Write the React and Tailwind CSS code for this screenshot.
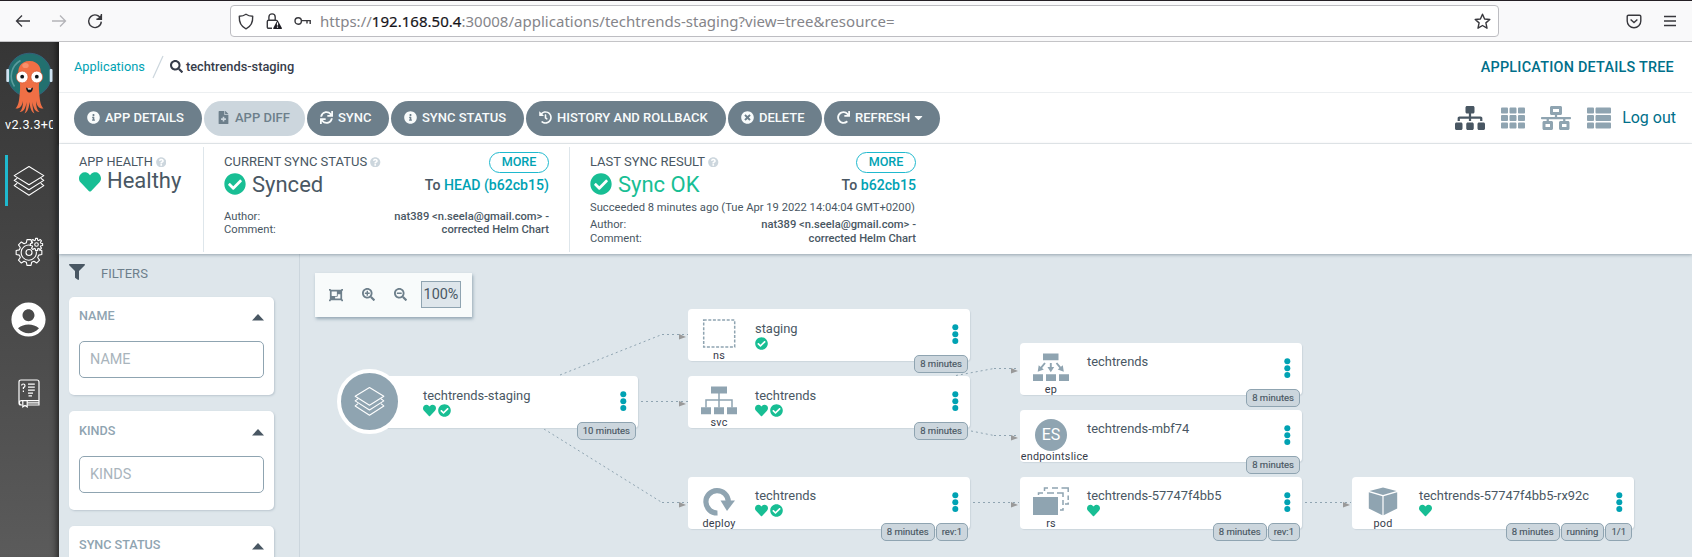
import React from "react";
import {
  FaInfoCircle, FaFileMedical, FaSync, FaHistory, FaTimesCircle, FaRedo, FaCaretDown,
  FaHeart, FaCheckCircle, FaQuestionCircle, FaSearch, FaSitemap, FaTh, FaNetworkWired, FaThList,
  FaFilter, FaSearchPlus, FaSearchMinus, FaObjectGroup,
} from "react-icons/fa";
import { MdAccountCircle } from "react-icons/md";

function BrowserBar() {
  return (
    <header className="flex h-[42px] shrink-0 items-center border-t border-b border-t-[#241f24] border-b-[#c4c4c7] bg-[#f9f9fa]">
      <div className="flex w-[230px] shrink-0 items-center pl-[15px]">
        <svg width="16" height="16" viewBox="0 0 16 16" fill="none" stroke="#38383d" strokeWidth="1.3">
          <path d="M15 8H1.5M7 2.5L1.5 8L7 13.5" />
        </svg>
        <svg className="ml-5" width="16" height="16" viewBox="0 0 16 16" fill="none" stroke="#b4b4b8" strokeWidth="1.3">
          <path d="M1 8H14.5M9 2.5L14.5 8L9 13.5" />
        </svg>
        <svg className="ml-5" width="16" height="16" viewBox="0 0 16 16" fill="none" stroke="#38383d" strokeWidth="1.4">
          <path d="M13.9 6A6.3 6.3 0 1 0 14.3 8.6M14.4 1V6.2H9.4" />
          <path d="M14.6 1.4V6.3H9.8Z" fill="#38383d" stroke="none" />
        </svg>
      </div>
      <div className="flex h-8 w-[1269px] items-center rounded-[4px] border border-[#bdbdc2] bg-white pl-[7px]">
        <svg width="16" height="17" viewBox="0 0 16 17" fill="none" stroke="#38383d" strokeWidth="1.4">
          <path d="M8 1.2C6 2.6 3.6 3.2 1.3 3.3C1 9 3 13.6 8 15.8C13 13.6 15 9 14.7 3.3C12.4 3.2 10 2.6 8 1.2Z" strokeLinejoin="round" />
        </svg>
        <svg className="ml-3" width="16" height="17" viewBox="0 0 16 17" fill="none">
          <path d="M6 15.3H2.6Q1.3 15.3 1.3 14V8.6Q1.3 7.3 2.6 7.3H9.6Q10.8 7.3 10.8 8M2.9 7V4A3 3 0 0 1 9.2 4V7" stroke="#38383d" strokeWidth="1.4" />
          <path d="M11.5 6.9L16 15.2Q16 16 15.2 16H7.8Q7 16 7.2 15.2Z" fill="#1c1b22" />
          <path d="M11.5 9.6V12.6M11.5 13.6V14.8" stroke="white" strokeWidth="1.2" />
        </svg>
        <svg className="ml-3" width="17" height="10" viewBox="0 0 17 10" fill="none" stroke="#38383d" strokeWidth="1.4">
          <circle cx="4.2" cy="5" r="3.2" />
          <path d="M7.4 4.6H16.2V8M13 4.6V7.4" />
        </svg>
        <div className="ml-[9px] font-['Noto_Sans'] text-[15px] leading-5 tracking-[0.02px] whitespace-nowrap text-[#85858a]">
          https://<span className="text-[#15141a] [-webkit-text-stroke:0.2px_#15141a]">192.168.50.4</span>:30008/applications/techtrends-staging?view=tree&amp;resource=
        </div>
        <svg className="mr-[7px] ml-auto" width="17" height="17" viewBox="0 0 17 17" fill="none" stroke="#38383d" strokeWidth="1.4" strokeLinejoin="round">
          <path d="M8.5 1.2L10.6 6L15.8 6.5L11.9 9.9L13 15.2L8.5 12.5L4 15.2L5.1 9.9L1.2 6.5L6.4 6Z" />
        </svg>
      </div>
      <svg className="ml-[127px]" width="16" height="15" viewBox="0 0 16 15" fill="none" stroke="#38383d" strokeWidth="1.4">
        <path d="M2.5 1.2H13.5Q14.8 1.2 14.8 2.5V7A6.8 6.8 0 0 1 1.2 7V2.5Q1.2 1.2 2.5 1.2Z" />
        <path d="M4.6 5.4L8 8.6L11.4 5.4" />
      </svg>
      <svg className="ml-[22px]" width="12" height="12" viewBox="0 0 12 12" stroke="#38383d" strokeWidth="1.4">
        <path d="M0 1.5H12M0 6H12M0 10.5H12" />
      </svg>
    </header>
  );
}

function Octopus() {
  return (
    <svg className="ml-px" width="48" height="62" viewBox="0 0 48 62">
      <circle cx="23.5" cy="23" r="21.8" fill="#22706f" stroke="#35607a" strokeWidth="1" />
      <path d="M8.5 34.5A18 18 0 0 1 14.5 8.5" fill="none" stroke="#5b9c9d" strokeWidth="1.6" />
      <rect x="0.3" y="17" width="2.8" height="13" rx="1" fill="#cfe3f2" />
      <rect x="43.7" y="17" width="2.8" height="13" rx="1" fill="#cfe3f2" />
      <path d="M23.5 9C14 9 10.5 17 13 25C14.2 30 14.5 36 13.6 43C13 50 12 54 9.5 56.5C14 57 16 54 17 49C17 54 16 58 13.5 60C18 60 20 55 20.5 50C20.6 54 20 59 18.5 61.5C22 60 23 55 23.5 50C24 55 25 60 28.5 61.5C27 59 26.4 54 26.5 50C27 55 29 60 33.5 60C31 58 30 54 30 49C31 54 33 57 37.5 56.5C35 54 34 50 33.4 43C32.5 36 32.8 30 34 25C36.5 17 33 9 23.5 9Z" fill="#ef6f45" />
      <ellipse cx="19.5" cy="13.5" rx="3.2" ry="2.6" fill="#f6916c" />
      <circle cx="16.2" cy="25" r="5.9" fill="white" stroke="#d9542e" strokeWidth="0.7" />
      <circle cx="30.8" cy="25" r="5.9" fill="white" stroke="#d9542e" strokeWidth="0.7" />
      <circle cx="16.2" cy="24.7" r="1.9" fill="#10171c" />
      <circle cx="30.8" cy="24.7" r="1.9" fill="#10171c" />
      <path d="M20 35.5Q23.5 37.5 27 35.5Q26.5 40.5 23.5 40.5Q20.5 40.5 20 35.5Z" fill="#10171c" />
      <path d="M21.7 36.3L25.3 36.3L25 37.4H22Z" fill="white" />
    </svg>
  );
}

function LayersIcon({ size }) {
  return (
    <svg width={size} height={size} viewBox="0 0 32 32" fill="none" stroke="white" strokeWidth="1.1" strokeLinejoin="round">
      <path d="M16 1.5L30.8 10.6L16 19.8L1.2 10.6Z" />
      <path d="M4.2 13.2L1.2 15.4L16 24.8L30.8 15.4L27.8 13.2" />
      <path d="M4.2 18.2L1.2 20.6L16 30.2L30.8 20.6L27.8 18.2" />
    </svg>
  );
}

// Outline of a toothed wheel; `from` and `count` select which teeth are drawn.
function gearPath(cx, cy, outer, inner, teeth, from, count) {
  const step = (Math.PI * 2) / teeth;
  const pts = [];
  for (let i = from; i < from + count; i++) {
    [[-0.34, inner], [-0.2, outer], [0.2, outer], [0.34, inner]].forEach(([o, r]) => {
      const a = (i + o) * step;
      pts.push(`${(cx + r * Math.cos(a)).toFixed(2)} ${(cy + r * Math.sin(a)).toFixed(2)}`);
    });
  }
  return `M${pts.join("L")}`;
}

function GearsIcon() {
  return (
    <svg width="30" height="30" viewBox="0 0 30 30" fill="none" stroke="white" strokeWidth="1.1" strokeLinejoin="round">
      <path d={gearPath(14, 15.5, 13, 10, 8, 0, 7)} />
      <path d="M15.5 8.2A7.6 7.6 0 1 0 21.3 14.5" />
      <circle cx="14" cy="15.5" r="3" />
      <path d={`${gearPath(21.5, 7.5, 6.2, 4.5, 8, 0, 8)}Z`} />
      <circle cx="21.5" cy="7.5" r="1.8" />
    </svg>
  );
}

function BookIcon() {
  return (
    <svg width="22" height="29" viewBox="0 0 22 29" fill="none" stroke="white" strokeWidth="1.2">
      <path d="M4 26H2.8Q1 26 1 24V3Q1 1 3 1H19Q21 1 21 3V21.6H3.6Q1.4 21.6 1.4 23.8Q1.4 26 3.6 26M9.4 26H21V21.6M9.4 23.8H21" />
      <path d="M4.8 22V27.8L7 26.4L9.2 27.8V22" />
      <path d="M10 5.2H16.8M10 8.2H16.8M10 11.2H16.8M10 14.2H15M10.5 16.8H14" />
      <path d="M3.6 6.6Q3.6 5 5.3 5Q7 5 7 6.7Q7 8 5.4 8.6V10M5.4 11.6V13" />
    </svg>
  );
}

function Sidebar() {
  return (
    <aside className="relative flex w-[59px] shrink-0 flex-col items-center bg-linear-to-b from-[#363636] to-[#5b5b5b] pt-[10px] shadow-[inset_-7px_0_6px_-5px_rgba(0,0,0,0.6)]">
      <Octopus />
      <div className="mt-px ml-[5px] w-[48px] self-start overflow-hidden text-[12.6px] leading-5 tracking-[0.3px] whitespace-nowrap text-white">v2.3.3+0</div>
      <div className="mt-5 flex h-[51px] w-full items-center pl-[5px]">
        <div className="h-full w-[3px] bg-[#1fb9ce]" />
        <div className="ml-[5px]"><LayersIcon size={32} /></div>
      </div>
      <div className="mt-[31px]"><GearsIcon /></div>
      <div className="mt-8 -ml-[2px]"><MdAccountCircle size={41} color="white" /></div>
      <div className="mt-[39px] -ml-px"><BookIcon /></div>
    </aside>
  );
}

function ActionButton({ icon: Icon, label, width, disabled, caret }) {
  return (
    <button className={`flex h-[35px] shrink-0 items-center rounded-full pl-[13px] text-[13px] font-medium whitespace-nowrap ${width} ${disabled ? "bg-[#ccd6dd] text-[#6d7f8b]" : "bg-[#6d7f8b] text-[#f8fbfb]"}`}>
      <Icon size={13} className="-mt-[2px] mr-[5px]" />
      <span className="-mt-px">{label}</span>
      {caret && <FaCaretDown size={13} className="-mt-px ml-[2px]" />}
    </button>
  );
}

function Help() {
  return <FaQuestionCircle size={10.5} className="ml-[3px] text-[#ccd6dd]" />;
}

function MoreButton() {
  return <div className="flex h-[21px] w-[60px] items-center justify-center rounded-full border border-[#1fb9ce] text-[12.6px] font-medium text-[#00a2b3]">MORE</div>;
}

function CommitRows({ gap }) {
  return (
    <div className={`flex flex-col text-[11.2px] leading-[13px] ${gap}`}>
      <div className="flex justify-between"><span>Author:</span><span className="font-medium">nat389 &lt;n.seela@gmail.com&gt; -</span></div>
      <div className="flex justify-between"><span>Comment:</span><span className="font-medium">corrected Helm Chart</span></div>
    </div>
  );
}

function StatusPanel() {
  return (
    <section className="relative z-10 flex h-[110px] shrink-0 bg-white pt-[3px] pb-[2px] pl-5 text-[#495763] shadow-[0_1px_3px_rgba(80,100,115,0.5)]">
      <div className="flex w-[125px] flex-col border-r border-[#dee6eb] pt-[7px]">
        <div className="flex items-center text-[12.7px] leading-4">APP HEALTH<Help /></div>
        <div className="-mt-[2px] flex items-center text-[22px] leading-[25px]">
          <FaHeart size={22} className="mt-[3px] mr-[6px] text-[#18be94]" />Healthy
        </div>
      </div>
      <div className="flex w-[366px] flex-col border-r border-[#dee6eb] pt-[5px] pr-5 pl-5">
        <div className="flex h-5 items-center justify-between text-[13px] leading-4">
          <span className="flex items-center">CURRENT SYNC STATUS<Help /></span><MoreButton />
        </div>
        <div className="flex items-center justify-between">
          <span className="flex items-center text-[22px] leading-[25px]"><FaCheckCircle size={22} className="-mt-px mr-[6px] text-[#18be94]" />Synced</span>
          <span className="mt-[2px] text-[14.1px] font-medium">To <span className="text-[#00a2b3]">HEAD (b62cb15)</span></span>
        </div>
        <CommitRows gap="mt-[13px]" />
      </div>
      <div className="flex w-[346px] flex-col pt-[5px] pl-5">
        <div className="flex h-5 items-center justify-between text-[13px] leading-4">
          <span className="flex items-center">LAST SYNC RESULT<Help /></span><MoreButton />
        </div>
        <div className="flex items-center justify-between">
          <span className="flex items-center text-[22px] leading-[25px] text-[#18be94]"><FaCheckCircle size={22} className="-mt-px mr-[6px]" />Sync OK</span>
          <span className="mt-[2px] text-[14.1px] font-medium">To <span className="text-[#00a2b3]">b62cb15</span></span>
        </div>
        <div className="mt-1 text-[11.2px] leading-[14px] whitespace-nowrap">Succeeded 8 minutes ago (Tue Apr 19 2022 14:04:04 GMT+0200)</div>
        <CommitRows gap="mt-[3px] gap-px" />
      </div>
    </section>
  );
}

function FilterCard({ title, height, offset }) {
  return (
    <div className={`w-[205px] shrink-0 rounded-[5px] bg-white px-[10px] shadow-[1px_1px_2px_rgba(110,130,145,0.3)] ${height} ${offset}`}>
      <div className="flex h-[39px] items-center justify-between text-[12.6px] font-medium text-[#8fa4b1]">
        {title}
        <svg className="mt-px" width="12" height="7" viewBox="0 0 12 7"><path d="M6 0L12 6.5H0Z" fill="#495763" /></svg>
      </div>
      <div className="mt-[5px] flex h-[37px] items-center rounded-[5px] border border-[#8fa4b1] pl-[10px] text-[14.4px] text-[#a9b4bc]">{title}</div>
    </div>
  );
}

function Filters() {
  return (
    <aside className="flex w-[241px] shrink-0 flex-col overflow-hidden border-r border-[#ccd6dd] pl-[10px]">
      <div className="flex h-[43px] shrink-0 items-start pt-[10px]">
        <FaFilter size={16} className="text-[#495763]" />
        <span className="mt-px ml-4 text-[13px] leading-[18px] text-[#6d7f8b]">FILTERS</span>
      </div>
      <div className="flex flex-col gap-4">
        <FilterCard title="NAME" height="h-[98px]" offset="pt-0" />
        <FilterCard title="KINDS" height="h-[99px]" offset="pt-px" />
        <FilterCard title="SYNC STATUS" height="h-[98px]" offset="pt-0" />
      </div>
    </aside>
  );
}

const kindIcons = {
  ns: (
    <svg width="36" height="32" viewBox="0 0 36 32"><rect x="2.7" y="2" width="31" height="27" fill="none" stroke="#8fa4b1" strokeWidth="1.5" strokeDasharray="3 1.6" /></svg>
  ),
  svc: (
    <svg width="36" height="32" viewBox="0 0 36 32" fill="#8fa4b1">
      <path d="M10 1.5H26V8.5H10ZM0 22.3H10V29.3H0ZM13 22.3H23V29.3H13ZM26 22.3H36V29.3H26Z" />
      <path d="M18 8V22.5M5 22.5V15H31V22.5" fill="none" stroke="#8fa4b1" strokeWidth="1.5" />
    </svg>
  ),
  deploy: (
    <svg width="36" height="32" viewBox="0 0 36 32">
      <path d="M16.5 27A11.2 11.2 0 1 1 27.3 15.5" fill="none" stroke="#8fa4b1" strokeWidth="5.2" />
      <path d="M19.5 14.5H34L26 25Z" fill="#8fa4b1" />
    </svg>
  ),
  ep: (
    <svg width="36" height="32" viewBox="0 0 36 32" fill="#8fa4b1">
      <path d="M10 1.5H25.5V8.3H10ZM0 22.3H10V29H0ZM13 22.3H23V29H13ZM26 22.3H36V29H26Z" />
      <path d="M12 11L8 15.8M17.8 11V15.8M23.5 11L27.5 15.8" stroke="#8fa4b1" strokeWidth="1.9" />
      <path d="M4.7 19.8L5.7 13.2L10.8 17.6ZM14.4 15H21.2L17.8 20.3ZM30.8 19.8L29.8 13.2L24.7 17.6Z" />
    </svg>
  ),
  rs: (
    <svg width="36" height="32" viewBox="0 0 36 32">
      <path d="M0 11H25V29H0Z" fill="#8fa4b1" />
      <path d="M5.5 9V7H10M14 7H21M24 7H30V11M30 14V19M30 22V24H27" fill="none" stroke="#8fa4b1" strokeWidth="1.5" />
      <path d="M11.5 5V2H15M19 2H25M28.5 2H35.2V6M35.2 9.5V14M35.2 16.5V18H32" fill="none" stroke="#8fa4b1" strokeWidth="1.5" />
    </svg>
  ),
  pod: (
    <svg width="36" height="32" viewBox="0 0 36 32" fill="#8fa4b1">
      <path d="M18 1.4L31.5 5L18 9L4.5 5Z" />
      <path d="M3.8 6.3L17.4 10.3V29.3L3.8 22.5ZM32.2 6.3L18.6 10.3V29.3L32.2 22.5Z" />
    </svg>
  ),
  endpointslice: (
    <div className="flex h-8 w-8 items-center justify-center rounded-full bg-[#8fa4b1] text-[16px] text-white">ES</div>
  ),
};

const nodes = [
  { kind: "app", name: "techtrends-staging", place: "left-[56px] top-[122px]", health: true, sync: true, tags: ["10 minutes"] },
  { kind: "ns", name: "staging", place: "left-[388px] top-[55px]", sync: true, tags: ["8 minutes"] },
  { kind: "svc", name: "techtrends", place: "left-[388px] top-[122px]", health: true, sync: true, tags: ["8 minutes"] },
  { kind: "deploy", name: "techtrends", place: "left-[388px] top-[223px]", raised: true, health: true, sync: true, tags: ["8 minutes", "rev:1"] },
  { kind: "ep", name: "techtrends", place: "left-[720px] top-[89px]", raised: true, tags: ["8 minutes"] },
  { kind: "endpointslice", name: "techtrends-mbf74", place: "left-[720px] top-[156px]", raised: true, tags: ["8 minutes"] },
  { kind: "rs", name: "techtrends-57747f4bb5", place: "left-[720px] top-[223px]", raised: true, health: true, tags: ["8 minutes", "rev:1"] },
  { kind: "pod", name: "techtrends-57747f4bb5-rx92c", place: "left-[1052px] top-[223px]", raised: true, health: true, tags: ["8 minutes", "running", "1/1"] },
];

function TreeNode({ kind, name, place, raised, health, sync, tags }) {
  return (
    <div className={`absolute flex h-[52px] w-[282px] rounded-[4px] bg-white shadow-[1px_1px_1px_#ccd6dd] ${place}`}>
      <div className="flex w-[62px] shrink-0 flex-col items-center">
        {kind === "app" ? (
          <div className="-mt-[7px] -ml-[36px] flex h-[65px] w-[65px] shrink-0 items-center justify-center rounded-full border-4 border-white bg-[#8fa4b1]">
            <LayersIcon size={31} />
          </div>
        ) : (
          <>
            <div className="mt-[9px] flex h-8 items-center justify-center">{kindIcons[kind]}</div>
            <div className={`text-[10.8px] leading-[11px] tracking-[0.25px] text-[#363c4a] ${kind === "endpointslice" ? "ml-[7px]" : "ml-0"}`}>{kind}</div>
          </>
        )}
      </div>
      <div className={`flex grow flex-col pl-[5px] ${raised ? "pt-[10px]" : "pt-[11px]"}`}>
        <div className="text-[12.9px] leading-[17px] text-[#495763]">{name}</div>
        <div className="flex gap-[2px] text-[#18be94]">
          {health && <FaHeart size={13} />}
          {sync && <FaCheckCircle size={13} />}
        </div>
      </div>
      <svg className="mt-[15px] mr-[11px]" width="7" height="21" viewBox="0 0 7 21" fill="#00a2b3">
        <circle cx="3.3" cy="3.3" r="3" /><circle cx="3.3" cy="10.2" r="3" /><circle cx="3.3" cy="17.1" r="3" />
      </svg>
      <div className="absolute right-[2px] -bottom-3 flex gap-px">
        {tags.map((t) => (
          <div key={t} className="flex h-[18px] items-center rounded-[5px] border border-[#8fa4b1] bg-[#ccd6dd] px-[5px] text-[9.5px] whitespace-nowrap text-[#495763] [-webkit-text-stroke:0.15px_#495763]">{t}</div>
        ))}
      </div>
    </div>
  );
}

const arrowHeads = [[386, 83], [386, 150], [386, 251], [718, 117], [718, 184], [718, 251], [1050, 251]];

function Edges() {
  return (
    <svg className="absolute top-0 left-0" width="1392" height="303" viewBox="0 0 1392 303" fill="none">
      <g stroke="#8fa4b1" strokeWidth="1" strokeDasharray="2 3">
        <path d="M260 121L362 80.5M362 80.5H388M341 147.5H388M244 175L362 248.5M362 248.5H388" />
        <path d="M656 121.5L694 114.5M694 114.5H719M671 177L694 181.5M694 181.5H719M673 248.5H719M1005 248.5H1051" />
      </g>
      {arrowHeads.map(([x, y]) => (
        <path key={`${x}-${y}`} d={`M${x} ${y}L${x - 7} ${y - 3}V${y + 2.5}Z`} fill="#999" />
      ))}
    </svg>
  );
}

function Canvas() {
  return (
    <main className="relative grow overflow-hidden">
      <Edges />
      <div className="absolute top-[19px] left-[15px] flex h-11 w-[157px] items-center bg-[#f8fbfb] pl-[14px] text-[#6d7f8b] shadow-[1px_2px_3px_rgba(80,110,130,0.5)]">
        <FaObjectGroup size={14} className="-mt-px" />
        <FaSearchPlus size={13} className="-mt-px ml-[19px]" />
        <FaSearchMinus size={13} className="-mt-px ml-[19px]" />
        <div className="-mt-px ml-[14px] flex h-[27px] w-10 items-center justify-center border border-[#8fa4b1] bg-[#dee6eb] text-[14.4px] text-[#495763]">100%</div>
      </div>
      {nodes.map((n) => <TreeNode key={n.place} {...n} />)}
    </main>
  );
}

export default function App() {
  return (
    <div className="flex h-[557px] w-[1692px] flex-col overflow-hidden bg-white font-[Roboto,sans-serif]">
      <BrowserBar />
      <div className="flex min-h-0 grow">
        <Sidebar />
        <div className="flex min-w-0 grow flex-col bg-[#dee6eb]">
          <div className="flex h-[51px] shrink-0 items-center border-b border-[#eceff1] bg-white pr-[18px] pl-[15px] text-[12.8px]">
            <span className="text-[#00a2b3]">Applications</span>
            <svg className="mr-[6px] ml-[7px]" width="12" height="24" viewBox="0 0 12 24"><path d="M1 23L11 1" stroke="#ccd6dd" strokeWidth="1.2" /></svg>
            <FaSearch size={13} className="-mt-px text-[#363c4a]" />
            <span className="ml-[3px] font-medium text-[#363c4a]">techtrends-staging</span>
            <span className="mt-px ml-auto text-[14.4px] font-medium tracking-[0.24px] text-[#006f8a]">APPLICATION DETAILS TREE</span>
          </div>
          <div className="flex h-[51px] shrink-0 items-center gap-[2px] border-b border-[#eceff1] bg-white pr-4 pl-[15px]">
            <ActionButton icon={FaInfoCircle} label="APP DETAILS" width="w-[128px]" />
            <ActionButton icon={FaFileMedical} label="APP DIFF" width="w-[101px]" disabled />
            <ActionButton icon={FaSync} label="SYNC" width="w-[82px]" />
            <ActionButton icon={FaInfoCircle} label="SYNC STATUS" width="w-[133px]" />
            <ActionButton icon={FaHistory} label="HISTORY AND ROLLBACK" width="w-[200px]" />
            <ActionButton icon={FaTimesCircle} label="DELETE" width="w-[94px]" />
            <ActionButton icon={FaRedo} label="REFRESH" width="w-[116px]" caret />
            <div className="ml-auto flex items-center text-[#8fa4b1]">
              <FaSitemap size={30} className="-mt-px text-[#495763]" />
              <FaTh size={24} className="ml-4" />
              <FaNetworkWired size={30} className="-mt-px ml-4" />
              <FaThList size={24} className="ml-4" />
              <span className="ml-[11px] text-[16px] text-[#006f8a]">Log out</span>
            </div>
          </div>
          <StatusPanel />
          <div className="flex min-h-0 grow">
            <Filters />
            <Canvas />
          </div>
        </div>
      </div>
    </div>
  );
}
